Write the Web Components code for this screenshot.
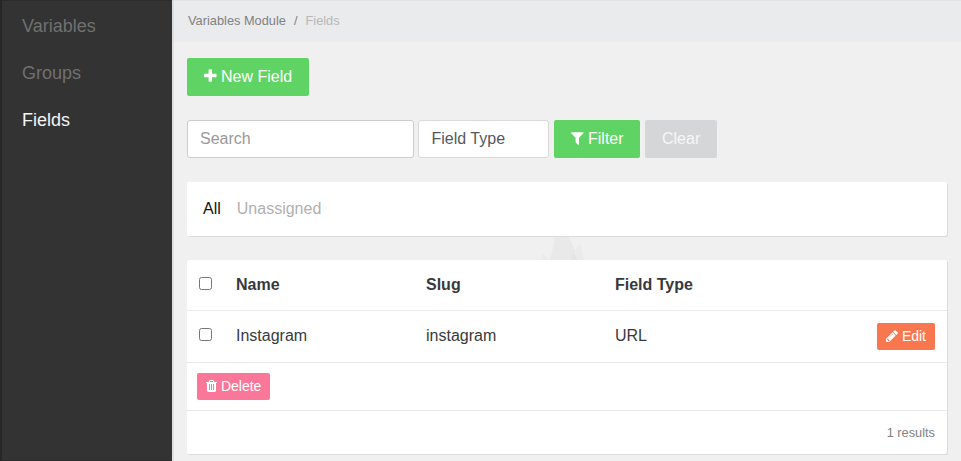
<!DOCTYPE html>
<html lang="en">
<head>
<meta charset="utf-8">
<title>Fields</title>
<style>
html,body{margin:0;height:100%;overflow:hidden}
body{background:#f0f0f0;font-family:"Liberation Sans",Arial,sans-serif;font-size:16px;line-height:24px;color:#373a3c}
</style>
</head>
<body>
<cp-shell>
  <cp-nav slot="nav">
    <cp-nav-item>Variables</cp-nav-item>
    <cp-nav-item>Groups</cp-nav-item>
    <cp-nav-item active>Fields</cp-nav-item>
  </cp-nav>
  <cp-breadcrumb slot="top"><span>Variables Module</span><span slot="current">Fields</span></cp-breadcrumb>
  <cp-button kind="success" icon="plus">New Field</cp-button>
  <cp-filters></cp-filters>
  <cp-panel><cp-tabs><span>All</span><span slot="rest">Unassigned</span></cp-tabs></cp-panel>
  <cp-watermark></cp-watermark>
  <cp-panel class="table"><cp-table></cp-table></cp-panel>
</cp-shell>
<script>
const define = (name, html, setup) => customElements.define(name, class extends HTMLElement {
  constructor() {
    super();
    this.attachShadow({mode: 'open'}).innerHTML = html;
  }
  connectedCallback() { if (setup) setup(this, this.shadowRoot); }
});

const bar = x => `M${x} 1376v-704q0-14-9-23t-23-9h-64q-14 0-23 9t-9 23v704q0 14 9 23t23 9h64q14 0 23-9t9-23z`;
const ICONS = {
  plus: [192, 1408, 'M1600 736v192q0 40-28 68t-68 28h-416v416q0 40-28 68t-68 28h-192q-40 0-68-28t-28-68v-416h-416q-40 0-68-28t-28-68v-192q0-40 28-68t68-28h416v-416q0-40 28-68t68-28h192q40 0 68 28t28 68v416h416q40 0 68 28t28 68z'],
  filter: [192, 1408, 'M1595 295q17 41-14 70l-493 493v742q0 42-39 59-13 5-25 5-27 0-45-19l-256-256q-19-19-19-45v-486l-493-493q-31-29-14-70 17-39 59-39h1280q42 0 59 39z'],
  pencil: [128, 1536, 'M491 1536l91-91-235-235-91 91v107h128v128h107zm523-928q0-22-22-22-10 0-17 7l-542 542q-7 7-7 17 0 22 22 22 10 0 17-7l542-542q7-7 7-17zm-54-192l416 416-832 832h-416v-416zm683 96q0 53-37 90l-166 166-416-416 166-165q36-38 90-38 53 0 91 38l235 234q37 39 37 91z'],
  trash: [192, 1408, bar(704) + bar(960) + bar(1216) + 'M672 384h448l-48-117q-7-9-17-11h-317q-10 2-17 11zM1600 416v64q0 14-9 23t-23 9h-96v948q0 83-47 143.5t-113 60.5h-832q-66 0-113-58.5t-47-141.5v-952h-96q-14 0-23-9t-9-23v-64q0-14 9-23t23-9h309l70-167q15-37 54-63t79-26h320q40 0 79 26t54 63l70 167h309q14 0 23 9t9 23z']
};

define('cp-icon', `<style>:host{display:inline-block;height:1em}svg{display:block;height:1em;fill:currentColor}</style><svg fill-rule="evenodd"><path/></svg>`, (el, root) => {
  const [x, w, d] = ICONS[el.getAttribute('name')];
  const svg = root.querySelector('svg');
  svg.setAttribute('viewBox', `${x} 0 ${w} 1792`);
  svg.style.width = w / 1792 + 'em';
  root.querySelector('path').setAttribute('d', d);
});

define('cp-button', `<style>
:host{display:inline-flex;align-items:center;box-sizing:border-box;height:38px;padding:0 17px;border-radius:2px;color:#fff;background:#5fd364;white-space:pre;vertical-align:top}
:host([kind=muted]){background:#d4d6d8;color:#f7f7f8}
:host([kind=warning]){background:#f8774f}
:host([kind=danger]){background:#fa7799}
:host([small]){height:27px;padding:0 9px;font-size:14px;line-height:21px}
.i:not(:empty){display:flex;margin-right:.278em;padding-bottom:2px}
</style><span class="i"></span><slot></slot>`, (el, root) => {
  const n = el.getAttribute('icon');
  if (n) root.querySelector('.i').innerHTML = `<cp-icon name="${n}"></cp-icon>`;
});

define('cp-shell', `<style>
:host{display:grid;grid-template-columns:172px 1fr;height:461px}
main{box-shadow:inset 2px 0 #dfe0e1;min-width:0}
.body{padding:17px 14px 0 15px}
</style><slot name="nav"></slot><main><slot name="top"></slot><div class="body"><slot></slot></div></main>`);

define('cp-nav', `<style>:host{display:block;background:#333;box-shadow:inset 2px 0 #272727,inset 0 1px #2c2c2c,inset 0 -1px #2c2c2c;padding-top:2px}</style><slot></slot>`);
define('cp-nav-item', `<style>:host{display:block;height:47px;line-height:48px;padding-left:22px;font-size:18px;color:#707070}:host([active]){color:#f4f4f4}</style><slot></slot>`);

define('cp-breadcrumb', `<style>
:host{display:flex;height:42px;margin-bottom:-1px;box-sizing:border-box;padding-left:16px;font-size:12.8px;line-height:41px;color:#818181;background:#e9ebed;box-shadow:inset 2px 0 #dcdddf,inset 0 1px #e1e3e5}
i{font-style:normal;margin:0 8px}.c{color:#b8b8b8}
</style><slot></slot><i>/</i><span class="c"><slot name="current"></slot></span>`);

define('cp-filters', `<style>
:host{display:flex;margin-top:24px;height:38px}
.f{box-sizing:border-box;height:38px;border:1px solid #ccc;border-radius:3px;background:#fff;padding:0 12px;line-height:36px;color:#999}
.q{width:227px;margin-right:4px}.t{width:131px;margin-right:5px;border-color:#d9d9d9;color:#55595c;padding-left:12.5px}
cp-button[icon]{width:86px}
cp-button+cp-button{width:72px;margin-left:5px}
</style><div class="f q">Search</div><div class="f t">Field Type</div><cp-button kind="success" icon="filter">Filter</cp-button><cp-button kind="muted">Clear</cp-button>`);

define('cp-panel', `<style>:host{display:block;position:relative;background:#fff;border-radius:2px;box-shadow:1px 1px #dcdcdc;margin-top:24px}:host(.table){margin-top:0}</style><slot></slot>`);
define('cp-tabs', `<style>:host{display:flex;gap:16px;height:54px;line-height:54px;padding-left:16px;color:#111}.r{color:#b0b0b0}</style><slot></slot><span class="r"><slot name="rest"></slot></span>`);

define('cp-watermark', `<style>:host{display:block;height:24px}svg{display:block;margin-left:353px}</style>
<svg width="46" height="24"><path fill="#e9e9e9" d="M14.5 1h14q6 9 9 23h-28q4-10 5-23z"/><path fill="#ebebeb" d="M2 17l7 7H2zM33 17l7-9 4 16h-9z"/><path fill="#e4e4e4" d="M33.500 16l4 8h-7z"/></svg>`);

define('cp-table', `<style>
:host{display:block}
.r{display:grid;grid-template-columns:49px 190px 189px 1fr auto;align-items:center;box-sizing:border-box;border-bottom:1px solid #eaeaea;padding-right:12px}
.h{height:51px;font-weight:bold}.h input{margin-bottom:3px}
.d{height:52px}.d span{padding-bottom:2px}.d input{margin-bottom:4px}
.a{height:48px;display:flex;align-items:center;padding-left:10px;box-sizing:border-box;border-bottom:1px solid #eaeaea}
.n{height:43px;line-height:43px;text-align:right;padding-right:12px;font-size:12.8px;color:#818181}
input{display:block;margin:0 0 0 12px;width:13px;height:13px}
.r input{margin-top:0}
</style>
<div class="r h"><input type="checkbox"><span>Name</span><span>Slug</span><span>Field Type</span></div>
<div class="r d"><input type="checkbox"><span>Instagram</span><span>instagram</span><span>URL</span><cp-button small kind="warning" icon="pencil">Edit</cp-button></div>
<div class="a"><cp-button small kind="danger" icon="trash">Delete</cp-button></div>
<div class="n">1 results</div>`);
</script>
</body>
</html>
